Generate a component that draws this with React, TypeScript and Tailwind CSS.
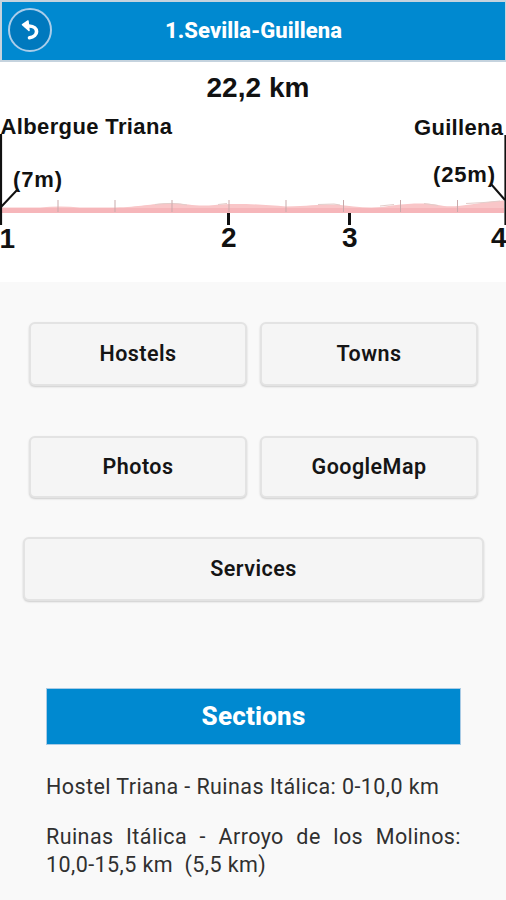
import clsx from 'clsx';

const marks = [58, 115, 172, 229, 286, 343.5, 400.5, 457.5];

const sections = [
  'Hostel Triana - Ruinas Itálica: 0-10,0 km',
  'Ruinas Itálica - Arroyo de los Molinos: 10,0-15,5 km\u00a0 (5,5 km)',
];

function Header() {
  return (
    <header className="relative flex h-[62px] items-center justify-center border-2 border-r border-[#c5d3de] bg-[#0089d0]">
      <button
        aria-label="Back"
        className="absolute top-[6px] left-[6px] flex size-[44px] items-center justify-center rounded-full border-2 border-[#a9cdea] bg-[#0079be]"
      >
        <svg width="40" height="40" viewBox="0 0 40 40" fill="none" className="shrink-0">
          <path
            d="M19.5 27.8C28.5 26.5 29.5 16.5 19 16H16"
            stroke="white"
            strokeWidth="3.6"
            strokeLinecap="round"
          />
          <path d="M12.5 14.6L18 11L19 20.5Z" fill="white" stroke="white" strokeWidth="1.5" strokeLinejoin="round" />
        </svg>
      </button>
      <h1 className="text-[22px] leading-7 font-extrabold tracking-[0.05px] text-white">1.Sevilla-Guillena</h1>
    </header>
  );
}

function ElevationProfile() {
  return (
    <svg
      viewBox="0 62 506 220"
      className="block h-[220px] w-full bg-white font-['Liberation_Sans',Arial,sans-serif] font-bold"
    >
      <path
        d="M2 207.5H40Q60 205.5 80 207.5H115C140 207 150 203.5 170 203.5C190 203.5 195 207 215 205C230 203 260 204 286 206.5C310 206 320 204 336 204.5C355 207 375 209 392 205.5C415 203 425 203 438 205C455 209 470 203 504 200.5V213H2Z"
        fill="#f9c6c8"
      />
      <path
        d="M155 204.5C165 203 178 203 187 205M218 204.5L227 203.5M318 204.5L334 204L340 205M380 206L394 204.5M424 203.5L438 205.5M466 203.5L484 202.5L500 201"
        fill="none"
        stroke="#e3cdca"
      />
      <path d="M2 208H504V213H2Z" fill="#f6b6ba" />
      {marks.map((x) => (
        <path key={x} d={`M${x} 200V212`} stroke="#c9a9aa" strokeWidth="1" />
      ))}
      <g stroke="#111" fill="none">
        <path d="M1 134V225M505.5 135V225" strokeWidth="2.2" />
        <path d="M1 207L18 189M491 184L505 200" strokeWidth="2" />
        <path d="M228.5 213V225M349.5 213V225" strokeWidth="3" />
      </g>
      <g fill="#111">
        <text x="206.5" y="97" fontSize="28" textLength="103">22,2 km</text>
        <text x="0.5" y="134" fontSize="22" textLength="171.5">Albergue Triana</text>
        <text x="414" y="135" fontSize="22" textLength="89">Guillena</text>
        <text x="13" y="187" fontSize="22" textLength="49">(7m)</text>
        <text x="433" y="182" fontSize="22" textLength="62">(25m)</text>
        <text x="-0.5" y="248" fontSize="28">1</text>
        <text x="221" y="247" fontSize="28">2</text>
        <text x="342" y="247" fontSize="28">3</text>
        <text x="491" y="247" fontSize="28">4</text>
      </g>
    </svg>
  );
}

function MenuButton({ label, className }: { label: string; className?: string }) {
  return (
    <button
      className={clsx(
        'flex items-center justify-center rounded-md border-2 border-[#e3e3e3] bg-[#f5f5f5] text-[21.5px] font-semibold tracking-[0.45px] text-[#151515] shadow-[0_1px_2px_rgba(0,0,0,0.18)]',
        className,
      )}
    >
      {label}
    </button>
  );
}

export default function App() {
  return (
    <div className="h-[900px] w-[506px] overflow-hidden bg-[#f9f9f9] font-[Roboto,sans-serif]">
      <Header />
      <ElevationProfile />

      <nav className="pt-10">
        <div className="grid grid-cols-2 gap-x-[13px] gap-y-[50px] pr-7 pl-[29px]">
          <MenuButton label="Hostels" className="h-[64px]" />
          <MenuButton label="Towns" className="h-[64px]" />
          <MenuButton label="Photos" className="h-[62px]" />
          <MenuButton label="GoogleMap" className="h-[62px]" />
        </div>
        <MenuButton label="Services" className="mt-[39px] ml-[23px] h-[64px] w-[461px]" />
      </nav>

      <section className="mt-[87px] mr-[45px] ml-[46px]">
        <h2 className="flex h-[57px] items-center justify-center border border-[#a9cbe5] bg-[#0089d0] pb-px text-[26px] font-extrabold tracking-[0.2px] text-white">
          Sections
        </h2>
        <div className="mt-[28px] flex flex-col gap-[22px] text-[21.5px] leading-7 tracking-[0.42px] text-[#303030]">
          {sections.map((s) => (
            <p key={s} className="text-justify">
              {s}
            </p>
          ))}
        </div>
      </section>
    </div>
  );
}
